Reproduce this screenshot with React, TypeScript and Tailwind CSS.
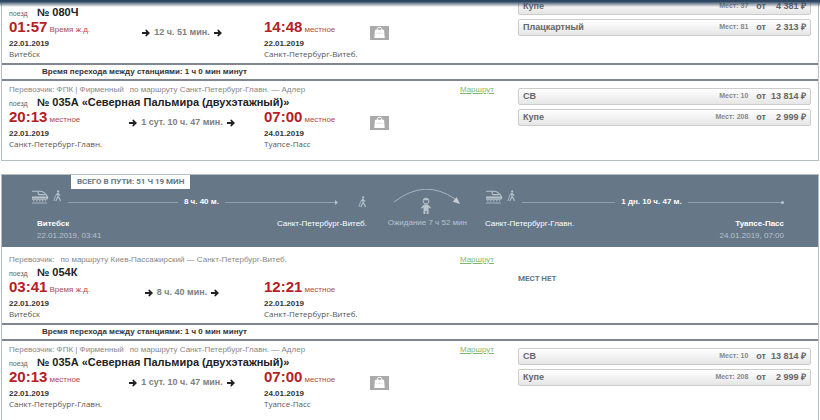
import type { ReactNode } from 'react';

type Stop = { time: string; zone: string; date: string; station: string };
type Fare = { name: string; seats: number; price: string };
type Leg = {
  carrier: string;
  route: string;
  train: string;
  from: Stop;
  to: Stop;
  duration: string;
  luggage: boolean;
  fares: Fare[];
};

const palmira: Leg = {
  carrier: 'Перевозчик: ФПК | Фирменный',
  route: 'по маршруту Санкт-Петербург-Главн. — Адлер',
  train: '№ 035А «Северная Пальмира (двухэтажный)»',
  from: { time: '20:13', zone: 'местное', date: '22.01.2019', station: 'Санкт-Петербург-Главн.' },
  to: { time: '07:00', zone: 'местное', date: '24.01.2019', station: 'Туапсе-Пасс' },
  duration: '1 сут. 10 ч. 47 мин.',
  luggage: true,
  fares: [
    { name: 'СВ', seats: 10, price: '13 814' },
    { name: 'Купе', seats: 208, price: '2 999' },
  ],
};

const train080: Leg = {
  carrier: '',
  route: '',
  train: '№ 080Ч',
  from: { time: '01:57', zone: 'Время ж.д.', date: '22.01.2019', station: 'Витебск' },
  to: { time: '14:48', zone: 'местное', date: '22.01.2019', station: 'Санкт-Петербург-Витеб.' },
  duration: '12 ч. 51 мин.',
  luggage: true,
  fares: [
    { name: 'Купе', seats: 37, price: '4 381' },
    { name: 'Плацкартный', seats: 81, price: '2 313' },
  ],
};

const train054: Leg = {
  carrier: 'Перевозчик:',
  route: 'по маршруту Киев-Пассажирский — Санкт-Петербург-Витеб.',
  train: '№ 054К',
  from: { time: '03:41', zone: 'Время ж.д.', date: '22.01.2019', station: 'Витебск' },
  to: { time: '12:21', zone: 'местное', date: '22.01.2019', station: 'Санкт-Петербург-Витеб.' },
  duration: '8 ч. 40 мин.',
  luggage: false,
  fares: [],
};

function Arrow() {
  return (
    <svg width="8" height="8" viewBox="0 0 8 8" className="shrink-0 fill-[#222222]" aria-hidden="true">
      <path d="M0 3h4.2L3.2.9 4.4.4 8 4 4.4 7.6l-1.2-.5L4.2 5H0z" />
    </svg>
  );
}

function Bag() {
  return (
    <svg width="19" height="14" viewBox="0 0 19 14" role="img" aria-label="Багаж">
      <rect width="19" height="14" fill="#aaaaaa" />
      <path d="M7.3 4V2.6Q7.3 1.4 9.5 1.4T11.7 2.6V4" fill="none" stroke="#fff" strokeWidth="1" />
      <path d="M5.8 3.8h7.4q.8 0 .9.8l.6 7.4H4.3l.6-7.4q.1-.8.9-.8z" fill="#fff" />
      <path d="M6 7.2h7M9.5 6.2v2" stroke="#dddddd" strokeWidth=".7" />
    </svg>
  );
}

function TrainIcon() {
  return (
    <svg width="18" height="14" viewBox="0 0 18 14" className="shrink-0" fill="none" stroke="#b9c4cd" aria-hidden="true">
      <path d="M1 1.2h7.6c3.4 0 6.4 2.6 7.9 5.6.6 1.3 0 2.4-1.5 2.4H1" strokeWidth="1.1" />
      <path d="M1 6.4h15.2l.6 2H1z" fill="#b9c4cd" stroke="none" />
      <path d="M7.2 1.6v2.2q0 .8.8.8h6" strokeWidth="1.1" />
      <path d="M2 10.8h13" strokeWidth="1" strokeDasharray="1.6 1.4" />
      <path d="M1 13h15" strokeWidth=".8" />
    </svg>
  );
}

function Walker() {
  return (
    <svg width="9" height="12" viewBox="0 0 9 12" className="shrink-0" fill="none" stroke="#b9c4cd" aria-hidden="true">
      <circle cx="5.2" cy="1.4" r="1.1" fill="#b9c4cd" stroke="none" />
      <path d="M5 2.8v4M5 3.2 3 5.2M5 3.4l2.2 2.2M5 6.6 2.8 11M5 6.6l1.6 2 .8 2.6" strokeWidth="1.1" />
      <path d="M2.8 5.2.8 11" strokeWidth=".8" />
    </svg>
  );
}

function WaitingIcon() {
  return (
    <svg width="68" height="25" viewBox="0 0 68 25" aria-hidden="true">
      <path d="M1 13Q32-11 62 10" fill="none" stroke="#a9b5bf" strokeWidth="1" />
      <path d="M67 15 59.8 12.8 63.6 8z" fill="#c3ccd3" />
      <circle cx="33" cy="12" r="2.9" fill="none" stroke="#b9c4cd" strokeWidth="1" />
      <path d="M30 11.2q3-3.4 6 0z" fill="#b9c4cd" />
      <path d="M31 15.4h4l3 3.4-.8.9-1.7-1.5V25h-1.8v-3.2h-1.4V25h-1.8v-6.8l-1.7 1.5-.8-.9z" fill="#b9c4cd" />
    </svg>
  );
}

function StopInfo({ stop }: { stop: Stop }) {
  return (
    <div className="whitespace-nowrap">
      <div className="flex h-5 items-baseline leading-[17px]">
        <span className="text-[15px] font-bold text-[#b52025]">{stop.time}</span>
        <span className="pl-0.5 text-[8px] text-[#b34a4c]">{stop.zone}</span>
      </div>
      <div className="text-[8px] font-bold leading-[11px] text-[#333333]">{stop.date}</div>
      <div className="font-['Open_Sans',sans-serif] text-[8px] leading-[10px] text-[#555555]">{stop.station}</div>
    </div>
  );
}

function FareButton({ fare }: { fare: Fare }) {
  return (
    <button
      type="button"
      className="flex h-[17px] w-full items-center rounded-xs border border-[#cccccc] bg-linear-to-b from-white to-[#e6e6e6] px-1 font-bold text-[#666666]"
    >
      <span className="text-[9px]">{fare.name}</span>
      <span className="ml-auto text-[7px] text-[#888888]">Мест: {fare.seats}</span>
      <span className="ml-2 text-[9px]">от</span>
      <span className="w-10 text-right text-[9px]">{fare.price} ₽</span>
    </button>
  );
}

function LegRow({ leg, className }: { leg: Leg; className: string }) {
  return (
    <section className={`grid grid-cols-[509fr_293fr] px-[7px] ${className}`}>
      <div>
        <div className="flex h-3 whitespace-nowrap text-[8px] leading-3 text-[#888888]">
          <span>{leg.carrier}</span>
          <span className="ml-1.5">{leg.route}</span>
          {leg.route && (
            <a href="#route" className="ml-auto mr-6 text-[#7fb96d] underline">
              Маршрут
            </a>
          )}
        </div>
        <h2 className="flex h-3 items-center whitespace-nowrap">
          <span className="w-7 pt-1 text-[7px] text-[#666666]">поезд</span>
          <span className="text-[11px] font-bold leading-3 text-[#222222]">{leg.train}</span>
        </h2>
        <div className="grid grid-cols-[95fr_160fr_106fr_148fr]">
          <StopInfo stop={leg.from} />
          <div className="flex h-[30px] items-center justify-center gap-1 whitespace-nowrap pr-1 text-[9px] font-bold text-[#808080]">
            <Arrow />
            {leg.duration}
            <Arrow />
          </div>
          <StopInfo stop={leg.to} />
          <div className="flex h-[30px] items-center">{leg.luggage && <Bag />}</div>
        </div>
      </div>
      {leg.fares.length > 0 ? (
        <div className="flex flex-col gap-1 pt-1">
          {leg.fares.map((fare) => (
            <FareButton key={fare.name} fare={fare} />
          ))}
        </div>
      ) : (
        <p className="pt-[19px] font-[Roboto,sans-serif] text-[8px] font-bold leading-3 text-[#667788]">МЕСТ НЕТ</p>
      )}
    </section>
  );
}

function Transfer() {
  return (
    <p className="border-y-2 border-[#808790] pl-10 text-[8px] font-bold leading-[14px] text-[#333333]">
      Время перехода между станциями: 1 ч 0 мин минут
    </p>
  );
}

function Track({ label, tip, children }: { label: string; tip: ReactNode; children?: ReactNode }) {
  return (
    <div className="flex h-[26px] items-center">
      <div className="flex gap-1 self-start pt-px">
        <TrainIcon />
        <Walker />
      </div>
      <span className="ml-1.5 h-px flex-1 bg-[#93a0ab]" />
      <span className="px-1.5 text-[8px] font-bold text-white">{label}</span>
      <span className="h-px flex-1 bg-[#93a0ab]" />
      {tip}
      {children}
    </div>
  );
}

function Summary() {
  return (
    <header className="flex h-[72px] flex-col bg-[#667788] text-white">
      <p className="ml-[69px] self-start bg-white px-1.5 font-[Roboto,sans-serif] text-[8px] font-bold leading-[14px] text-[#667788]">
        ВСЕГО В ПУТИ: 51 Ч 19 МИН
      </p>
      <div className="grid grid-cols-[338fr_21fr_75fr_18fr_301fr] whitespace-nowrap pl-[29px] pr-[34px] text-[8px] leading-3">
        <div>
          <Track
            label="8 ч. 40 м."
            tip={
              <svg width="3" height="5" viewBox="0 0 3 5" fill="#b9c4cd" aria-hidden="true">
                <path d="M0 0 3 2.5 0 5z" />
              </svg>
            }
          >
            <span className="ml-5">
              <Walker />
            </span>
          </Track>
          <div className="flex justify-between pl-1.5 pt-[3px]">
            <div>
              <p className="font-bold">Витебск</p>
              <p className="text-[#b9c4cd]">22.01.2019, 03:41</p>
            </div>
            <p>Санкт-Петербург-Витеб.</p>
          </div>
        </div>
        <div className="col-start-3 flex flex-col items-center">
          <WaitingIcon />
          <p className="pt-[3px] text-[#b9c4cd]">Ожидание 7 ч 52 мин</p>
        </div>
        <div className="col-start-5">
          <Track label="1 дн. 10 ч. 47 м." tip={<span className="size-[3px] rounded-full bg-[#b9c4cd]" />} />
          <div className="flex justify-between pt-[3px]">
            <p>Санкт-Петербург-Главн.</p>
            <div className="text-right">
              <p className="font-bold">Туапсе-Пасс</p>
              <p className="text-[#b9c4cd]">24.01.2019, 07:00</p>
            </div>
          </div>
        </div>
      </div>
    </header>
  );
}

export default function App() {
  return (
    <div className="relative h-screen overflow-hidden bg-white px-px font-['Liberation_Sans',Arial,sans-serif]">
      <div className="absolute inset-x-0 top-0 z-10 h-[7px] bg-linear-to-b from-[#2c4560] from-20% to-transparent" />
      <main className="-mt-[9px] flex flex-col gap-[13px]">
        <article className="border border-t-0 border-[#b4bfc1]">
          <LegRow leg={train080} className="pb-1 pt-[3px]" />
          <Transfer />
          <LegRow leg={palmira} className="pb-[11px] pt-[3px]" />
        </article>
        <article className="border border-[#b4bfc1]">
          <Summary />
          <LegRow leg={train054} className="pb-1 pt-[7px]" />
          <Transfer />
          <LegRow leg={palmira} className="pb-[11px] pt-[3px]" />
        </article>
      </main>
    </div>
  );
}
